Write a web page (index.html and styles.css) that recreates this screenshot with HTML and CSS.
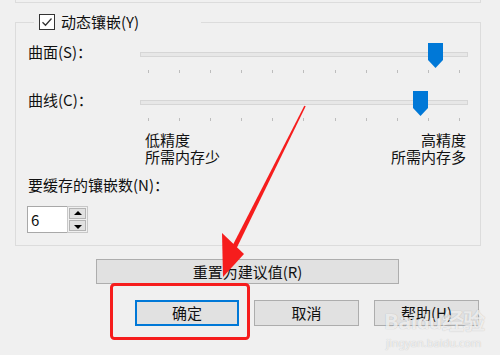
FILE: index.html
```html
<!DOCTYPE html>
<html lang="zh-CN">
<head>
  <meta charset="UTF-8" />
  <meta name="viewport" content="width=device-width, initial-scale=1.0" />
  <title>动态镶嵌</title>
  <link rel="stylesheet" href="styles.css">
</head>
<body>
  <div class="prev-box"></div>

  <fieldset class="group">
    <legend class="group-title">
      <span class="check">
        <svg width="16" height="16" viewBox="0 0 16 16">
          <rect x="0.5" y="0.5" width="15" height="15" fill="#fff" stroke="#333"/>
          <path d="M3.5 8.2 L6.5 11.2 L12.5 4.5" fill="none" stroke="#333" stroke-width="1.3"/>
        </svg>
      </span>
      <span>动态镶嵌(Y)</span>
    </legend>

    <div class="slider-row">
      <label class="slider-label">曲面(S)：</label>
      <div class="slider">
        <div class="track"></div>
        <div class="thumb" style="left: 288px"></div>
        <div class="ticks">
          <span></span><span></span><span></span><span></span><span></span><span></span>
          <span></span><span></span><span></span><span></span><span></span>
        </div>
      </div>
    </div>

    <div class="slider-row">
      <label class="slider-label">曲线(C)：</label>
      <div class="slider">
        <div class="track"></div>
        <div class="thumb" style="left: 273px"></div>
        <div class="ticks">
          <span></span><span></span><span></span><span></span><span></span><span></span>
          <span></span><span></span><span></span><span></span><span></span>
        </div>
      </div>
    </div>

    <div class="scale-labels">
      <div>低精度<br>所需内存少</div>
      <div class="scale-right">高精度<br>所需内存多</div>
    </div>

    <div class="count-label">要缓存的镶嵌数(N)：</div>
    <div class="spin">
      <div class="spin-value">6</div>
      <div class="spin-btns">
        <span class="spin-up"></span>
        <span class="spin-down"></span>
      </div>
    </div>
  </fieldset>

  <div class="reset-row">
    <button class="btn reset">重置为建议值(R)</button>
  </div>

  <div class="actions">
    <button class="btn primary">确定</button>
    <button class="btn">取消</button>
    <button class="btn">帮助(H)</button>
  </div>

  <!-- red annotation drawn over the dialog -->
  <svg class="annotate" width="500" height="355" viewBox="0 0 500 355">
    <rect x="111.5" y="284.5" width="137" height="54" rx="3" fill="none" stroke="#f61d1d" stroke-width="3"/>
    <polygon points="304.3,105.7 305.7,106.3 236.2,249.1 231.8,246.9" fill="#f61d1d"/>
    <polygon points="223,277 222,233 244,254" fill="#f61d1d"/>
  </svg>

  <div class="watermark">
    <div class="wm-logo">Bai<span class="wm-paw">du</span>经验</div>
    <div class="wm-url">jingyan.baidu.com</div>
  </div>
</body>
</html>
```

FILE: styles.css
```css
body {
  margin: 0;
  width: 500px;
  height: 355px;
  overflow: hidden;
  position: relative;
  background-color: #f0f0f0;
  font-family: "Noto Sans CJK SC", "Noto Sans", sans-serif;
  font-size: 15px;
  color: #111;
}
.prev-box {
  margin: 0 19px 0 15px;
  height: 2px;
  border: 1px solid #dcdcdc;
  border-top: none;
}
.group {
  margin: 11px 19px 0 15px;
  padding: 13px 12px 12px 12px;
  border: 1px solid #dcdcdc;
  min-width: 0;
}
.group-title {
  margin-left: 6px;
  padding: 0 62px 0 5px;
  height: 16px;
  display: flex;
  align-items: center;
  gap: 6px;
  line-height: 16px;
}
.check {
  display: block;
  width: 16px;
  height: 16px;
}
.check svg {
  display: block;
}
.slider-row {
  display: flex;
  align-items: flex-start;
  margin-bottom: 18px;
}
.slider-label {
  width: 112px;
  line-height: 18px;
}
.slider {
  position: relative;
  width: 328px;
  height: 30px;
}
.track {
  margin-top: 9px;
  height: 3px;
  background-color: #e7e7e7;
  border: 1px solid #d6d6d6;
}
.thumb {
  position: absolute;
  top: 0;
  width: 15px;
  height: 25px;
  background-color: #0078d7;
  clip-path: polygon(0 0, 100% 0, 100% 68%, 50% 100%, 0 68%);
}
.ticks {
  margin-top: 13px;
  padding: 0 8px;
  display: flex;
  justify-content: space-between;
}
.ticks span {
  width: 1px;
  height: 3px;
  background-color: #bdbdbd;
}
.scale-labels {
  margin: -8px 2px 0 117px;
  display: flex;
  justify-content: space-between;
  line-height: 17px;
}
.scale-right {
  text-align: right;
}
.count-label {
  margin-top: 11px;
  line-height: 18px;
}
.spin {
  margin: 12px 0 0 -1px;
  display: flex;
  width: 61px;
  height: 27px;
}
.spin-value {
  width: 40px;
  border: 1px solid #a8a8a8;
  border-right: none;
  background-color: #fff;
  padding-left: 3px;
  line-height: 25px;
  box-sizing: border-box;
}
.spin-btns {
  width: 21px;
  display: flex;
  flex-direction: column;
  gap: 1px;
  padding: 1px;
  border: 1px solid #c8c8c8;
  box-sizing: border-box;
  background-color: #f0f0f0;
}
.spin-btns span {
  flex: 1;
  position: relative;
  background-color: #e1e1e1;
  border: 1px solid #b4b4b4;
}
.spin-btns span::after {
  content: "";
  position: absolute;
  left: 50%;
  top: 50%;
  margin-left: -4px;
  border-left: 4px solid transparent;
  border-right: 4px solid transparent;
}
.spin-up::after {
  margin-top: -3px;
  border-bottom: 4px solid #000;
}
.spin-down::after {
  margin-top: -1px;
  border-top: 4px solid #000;
}
.btn {
  font-family: inherit;
  font-size: 15px;
  color: #111;
  background-color: #e1e1e1;
  border: 1px solid #adadad;
  padding: 0;
  height: 26px;
  line-height: 22px;
}
.reset-row {
  margin: 13px 0 0 96px;
}
.reset {
  width: 303px;
  height: 25px;
}
.actions {
  margin: 16px 0 0 135px;
  display: flex;
  gap: 15px;
}
.actions .btn {
  width: 105px;
}
.btn.primary {
  width: 104px;
  border-color: #0078d7;
  box-shadow: inset 0 0 0 1px #0078d7;
}
.annotate {
  position: absolute;
  left: 0;
  top: 0;
  pointer-events: none;
}
.watermark {
  position: absolute;
  left: 384px;
  top: 306px;
  color: rgba(255, 255, 255, 0.75);
  text-shadow: 0 0 1px rgba(0, 0, 0, 0.25);
  pointer-events: none;
}
.wm-logo {
  font-family: "Noto Sans", sans-serif;
  font-size: 22px;
  font-weight: bold;
  line-height: 28px;
  letter-spacing: -0.5px;
}
.wm-logo .wm-paw {
  font-size: 20px;
}
.wm-url {
  font-family: "Noto Sans", sans-serif;
  font-size: 11px;
  line-height: 14px;
  margin-left: 2px;
}
```
